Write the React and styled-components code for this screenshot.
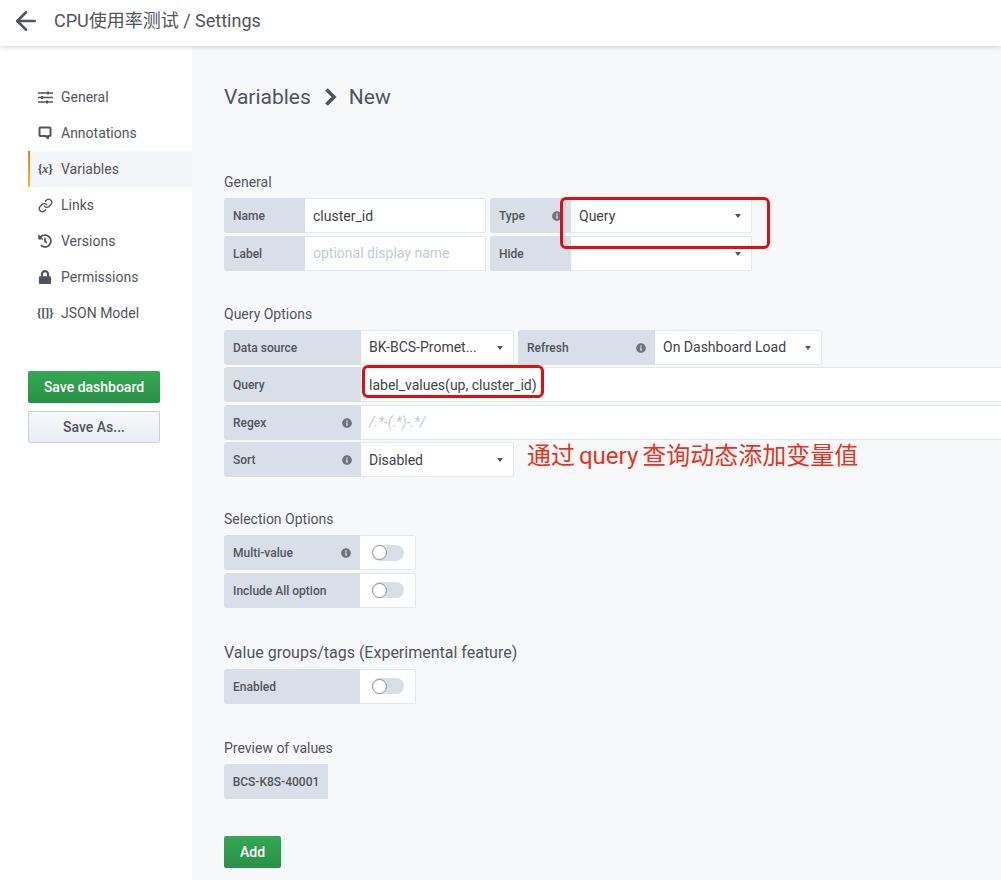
import React from "react";
import styled, { createGlobalStyle } from "styled-components";
import { ArrowLeft, Link as LinkIcon } from "lucide-react";
import { FaHistory, FaInfoCircle, FaLock } from "react-icons/fa";

const GlobalStyle = createGlobalStyle`
  html, body {
    margin: 0;
    height: 100%;
    overflow: hidden;
    background: #f7f8fa;
    color: #52545c;
    font-family: Roboto, "Noto Sans CJK SC", sans-serif;
    font-size: 14px;
  }
  * { box-sizing: border-box; }
`;

const Header = styled.header`
  position: relative;
  z-index: 1;
  height: 46px;
  display: flex;
  align-items: center;
  background: #ffffff;
  box-shadow: 0 1px 5px rgba(150, 160, 190, 0.45);
  padding: 0 0 4px 11px;
  color: #52545c;
`;

const HeaderTitle = styled.div`
  margin-left: 13px;
  font-size: 18px;
  line-height: 22px;
  color: #52545c;
`;

const Layout = styled.div`
  display: flex;
  height: 834px;
`;

const Sidebar = styled.nav`
  width: 192px;
  flex: none;
  background: #ffffff;
  padding: 33px 0 0 28px;
`;

const NavItem = styled.div`
  height: 36px;
  display: flex;
  align-items: center;
  padding-left: ${(p) => (p.$active ? "7px" : "9px")};
  font-size: 14px;
  color: #52545c;
  background: ${(p) => (p.$active ? "#f4f5f8" : "transparent")};
  border-left: ${(p) => (p.$active ? "2px solid" : "0")};
  border-image: ${(p) =>
    p.$active ? "linear-gradient(#eb7b18, #f5b82e) 1" : "none"};
`;

const NavIcon = styled.span`
  width: 16px;
  margin-right: 8px;
  display: flex;
  justify-content: center;
  align-items: center;
  color: #52545c;
  font-size: ${(p) => p.$size || 14}px;
`;

const GlyphIcon = styled(NavIcon)`
  font-family: "Liberation Serif", serif;
  font-size: 13px;
  font-weight: 700;
  letter-spacing: -0.5px;
  white-space: nowrap;
`;

const SaveGroup = styled.div`
  margin-top: 40px;
  width: 132px;
  display: flex;
  flex-direction: column;
  gap: 8px;
`;

const Button = styled.button`
  height: 32px;
  padding: 0;
  font-family: inherit;
  font-size: 14px;
  font-weight: 500;
  border-radius: 2px;
  width: ${(p) => p.$width || "100%"};
  color: ${(p) => (p.$primary ? "#ffffff" : "#52545c")};
  background: ${(p) =>
    p.$primary
      ? "linear-gradient(#34a853, #299047)"
      : "linear-gradient(#f7f8fa, #e9edf2)"};
  border: ${(p) => (p.$primary ? "0" : "1px solid #c7d0d9")};
`;

const Main = styled.main`
  flex: 1;
  min-width: 0;
  background: #f7f8fa;
  padding: 37px 0 0 32px;
  overflow: hidden;
`;

const PageTitle = styled.h1`
  margin: 0 0 63px;
  height: 28px;
  display: flex;
  align-items: center;
  gap: 12px;
  font-size: 21px;
  font-weight: 400;
  color: #52545c;
`;

const SectionTitle = styled.h5`
  margin: ${(p) => p.$top || 0}px 0 ${(p) => p.$gap || 8}px;
  height: ${(p) => p.$height || 16}px;
  line-height: ${(p) => p.$height || 16}px;
  font-size: ${(p) => p.$size || 14}px;
  font-weight: 400;
  color: #52545c;
`;

const Row = styled.div`
  display: flex;
  height: 35px;
  margin-bottom: 2.5px;
`;

const Field = styled.div`
  display: flex;
  height: 35px;
  margin-right: ${(p) => (p.$grow ? "-4px" : "4px")};
  flex: ${(p) => (p.$grow ? "1" : "none")};
  min-width: 0;
`;

const Label = styled.div`
  width: ${(p) => p.$width}px;
  flex: none;
  display: flex;
  align-items: center;
  justify-content: space-between;
  padding: 1px 9px 0;
  background: #d8dfe8;
  border-radius: 3px 0 0 3px;
  font-size: 12px;
  font-weight: 500;
  color: #52545c;
`;

const InfoIcon = styled(FaInfoCircle)`
  font-size: 10px;
  color: #6f727a;
`;

const Value = styled.div`
  position: relative;
  width: ${(p) => (p.$width ? `${p.$width}px` : "auto")};
  flex: ${(p) => (p.$width ? "none" : "1")};
  display: flex;
  align-items: center;
  padding-left: 8px;
  background: #ffffff;
  border: 1px solid #e3e7ee;
  border-left: 0;
  border-radius: 0 3px 3px 0;
  font-size: 14px;
  color: ${(p) => (p.$placeholder ? "#c4cad3" : "#3f4249")};
  font-style: ${(p) => (p.$italic ? "italic" : "normal")};
  white-space: nowrap;
`;

const Caret = styled.span`
  position: absolute;
  right: 10px;
  top: 15px;
  border-left: 3.5px solid transparent;
  border-right: 3.5px solid transparent;
  border-top: 4px solid #52545c;
`;

// hand-drawn red annotations sit over the form
const Highlight = styled.span`
  position: absolute;
  left: ${(p) => p.$left}px;
  top: ${(p) => p.$top}px;
  width: ${(p) => p.$w}px;
  height: ${(p) => p.$h}px;
  border: 3px solid #e00f0f;
  border-radius: 6px;
  pointer-events: none;
  z-index: 1;
`;

const Annotation = styled.div`
  margin-left: 9px;
  height: 35px;
  line-height: 28px;
  font-size: 24px;
  word-spacing: -2px;
  color: #e7331c;
  white-space: nowrap;
`;

const SwitchBox = styled.div`
  width: 56px;
  display: flex;
  align-items: center;
  justify-content: center;
  background: #ffffff;
  border: 1px solid #e3e7ee;
  border-left: 0;
  border-radius: 0 3px 3px 0;
`;

const Track = styled.span`
  width: 32px;
  height: 16px;
  border-radius: 8px;
  background: #d8dfe8;
  display: flex;
  align-items: center;
`;

const Knob = styled.span`
  width: 15px;
  height: 15px;
  border-radius: 50%;
  background: #ffffff;
  border: 1px solid #8e9299;
`;

const PreviewChip = styled.div`
  width: 104px;
  height: 35px;
  padding-top: 1px;
  display: flex;
  align-items: center;
  justify-content: center;
  background: #d8dfe8;
  border-radius: 3px 0 0 3px;
  font-size: 12px;
  font-weight: 500;
  color: #52545c;
`;

const AddRow = styled.div`
  margin-top: 37px;
`;

function SlidersIcon() {
  return (
    <svg width="15" height="13" viewBox="0 0 15 13" fill="none" stroke="#52545c" strokeWidth="1.3">
      <path d="M0 2h15M0 6.5h15M0 11h15" />
      <path d="M10 .5v3M4 5v3M9 9.5v3" strokeWidth="2" />
    </svg>
  );
}

function CommentIcon() {
  return (
    <svg width="14" height="14" viewBox="0 0 14 14" fill="none" stroke="#52545c" strokeWidth="2">
      <path d="M2.5 1.5h9a1 1 0 0 1 1 1v6.5a1 1 0 0 1-1 1h-1.5v2.2l-2.2-2.2H2.5a1 1 0 0 1-1-1V2.5a1 1 0 0 1 1-1z" strokeLinejoin="round" />
    </svg>
  );
}

function Chevron() {
  return (
    <svg width="14" height="18" viewBox="0 0 14 18" fill="none" stroke="#52545c" strokeWidth="3.6">
      <path d="M3.5 1.5L11 9l-7.5 7.5" />
    </svg>
  );
}

function Switch({ label, info }) {
  return (
    <Row>
      <Field>
        <Label $width={136}>
          {label}
          {info && <InfoIcon />}
        </Label>
        <SwitchBox>
          <Track>
            <Knob />
          </Track>
        </SwitchBox>
      </Field>
    </Row>
  );
}

const navItems = [
  { name: "General", icon: <NavIcon><SlidersIcon /></NavIcon> },
  { name: "Annotations", icon: <NavIcon><CommentIcon /></NavIcon> },
  { name: "Variables", icon: <GlyphIcon>{"{"}<i>x</i>{"}"}</GlyphIcon>, active: true },
  { name: "Links", icon: <NavIcon><LinkIcon size={15} strokeWidth={2.2} /></NavIcon> },
  { name: "Versions", icon: <NavIcon><FaHistory /></NavIcon> },
  { name: "Permissions", icon: <NavIcon $size={14}><FaLock /></NavIcon> },
  { name: "JSON Model", icon: <GlyphIcon>{"{[]}"}</GlyphIcon> },
];

export default function App() {
  return (
    <>
      <GlobalStyle />
      <Header>
        <ArrowLeft size={30} strokeWidth={2} />
        <HeaderTitle>CPU使用率测试 / Settings</HeaderTitle>
      </Header>
      <Layout>
        <Sidebar>
          {navItems.map((item) => (
            <NavItem key={item.name} $active={item.active}>
              {item.icon}
              {item.name}
            </NavItem>
          ))}
          <SaveGroup>
            <Button $primary>Save dashboard</Button>
            <Button>Save As...</Button>
          </SaveGroup>
        </Sidebar>
        <Main>
          <PageTitle>
            Variables <Chevron /> New
          </PageTitle>

          <SectionTitle>General</SectionTitle>
          <Row>
            <Field>
              <Label $width={81}>Name</Label>
              <Value $width={181}>cluster_id</Value>
            </Field>
            <Field>
              <Label $width={81}>
                Type <InfoIcon />
              </Label>
              <Value $width={181}>
                Query
                <Caret />
                <Highlight $left={-11} $top={-2} $w={210} $h={52} />
              </Value>
            </Field>
          </Row>
          <Row>
            <Field>
              <Label $width={81}>Label</Label>
              <Value $width={181} $placeholder>optional display name</Value>
            </Field>
            <Field>
              <Label $width={81}>Hide</Label>
              <Value $width={181}>
                <Caret />
              </Value>
            </Field>
          </Row>

          <SectionTitle $top={35}>Query Options</SectionTitle>
          <Row>
            <Field>
              <Label $width={137}>Data source</Label>
              <Value $width={153}>
                BK-BCS-Promet...
                <Caret />
              </Value>
            </Field>
            <Field>
              <Label $width={137}>
                Refresh <InfoIcon />
              </Label>
              <Value $width={167}>
                On Dashboard Load
                <Caret />
              </Value>
            </Field>
          </Row>
          <Row>
            <Field $grow>
              <Label $width={137}>Query</Label>
              <Value>
                label_values(up, cluster_id)
                <Highlight $left={1} $top={-3} $w={182} $h={33} />
              </Value>
            </Field>
          </Row>
          <Row>
            <Field $grow>
              <Label $width={137}>
                Regex <InfoIcon />
              </Label>
              <Value $placeholder $italic>/.*-(.*)-.*/</Value>
            </Field>
          </Row>
          <Row>
            <Field>
              <Label $width={137}>
                Sort <InfoIcon />
              </Label>
              <Value $width={153}>
                Disabled
                <Caret />
              </Value>
            </Field>
            <Annotation>通过 query 查询动态添加变量值</Annotation>
          </Row>

          <SectionTitle $top={34}>Selection Options</SectionTitle>
          <Switch label="Multi-value" info />
          <Switch label="Include All option" />

          <SectionTitle $top={36} $size={16} $height={18} $gap={7}>
            Value groups/tags (Experimental feature)
          </SectionTitle>
          <Switch label="Enabled" />

          <SectionTitle $top={36}>Preview of values</SectionTitle>
          <PreviewChip>BCS-K8S-40001</PreviewChip>

          <AddRow>
            <Button $primary $width="57px">Add</Button>
          </AddRow>
        </Main>
      </Layout>
    </>
  );
}
